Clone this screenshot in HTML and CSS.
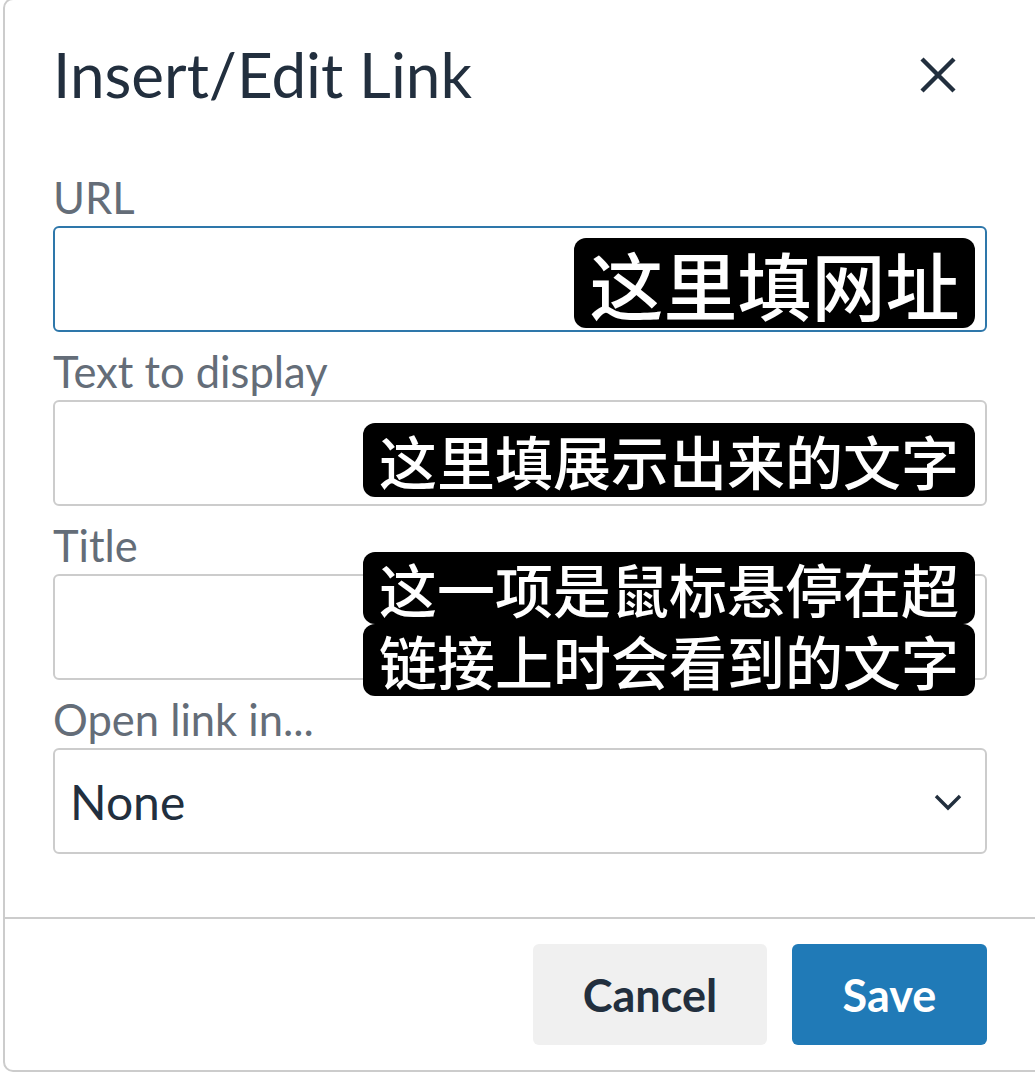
FILE: index.html
```html
<!DOCTYPE html>
<html lang="en">
<head>
<meta charset="utf-8">
<title>Insert/Edit Link</title>
<link rel="stylesheet" href="styles.css">
</head>
<body>
<div class="dialog">
  <div class="header">
    <h1 class="title">Insert/Edit Link</h1>
    <button class="close" aria-label="Close">
      <svg width="40" height="40" viewBox="0 0 40 40"><path d="M4 4 L36 36 M36 4 L4 36" stroke="#222f3e" stroke-width="4.4" fill="none"/></svg>
    </button>
  </div>
  <div class="body">
    <div class="field">
      <label class="label">URL</label>
      <div class="input focused"></div>
      <div class="note note-url"><span class="note-line">这里填网址</span></div>
    </div>
    <div class="field">
      <label class="label">Text to display</label>
      <div class="input"></div>
      <div class="note note-text"><span class="note-line">这里填展示出来的文字</span></div>
    </div>
    <div class="field">
      <label class="label">Title</label>
      <div class="input"></div>
      <div class="note note-title"><span class="note-line">这一项是鼠标悬停在超</span><span class="note-line">链接上时会看到的文字</span></div>
    </div>
    <div class="field">
      <label class="label">Open link in...</label>
      <div class="input select">
        <span class="select-value">None</span>
        <svg class="chevron" width="30" height="18" viewBox="0 0 30 18"><path d="M3 3 L15 15 L27 3" stroke="#222f3e" stroke-width="3.4" fill="none"/></svg>
      </div>
    </div>
  </div>
  <div class="footer">
    <button class="btn btn-cancel">Cancel</button>
    <button class="btn btn-save">Save</button>
  </div>
</div>
</body>
</html>
```

FILE: styles.css
```css
html, body {
  margin: 0;
  padding: 0;
  background: #ffffff;
  overflow: hidden;
  width: 1035px;
  height: 1072px;
}
body {
  font-family: Lato, "Noto Sans", sans-serif;
  color: #222f3e;
}
.dialog {
  box-sizing: border-box;
  width: 1120px;
  height: 1074px;
  margin-top: -2px;
  margin-left: 3px;
  border: 2px solid #cccccc;
  border-radius: 10px;
  display: flex;
  flex-direction: column;
}
.header {
  height: 158px;
  box-sizing: border-box;
  display: flex;
  align-items: flex-start;
  padding-left: 48px;
  width: 985px;
}
.title {
  margin: 0;
  margin-top: 34px;
  font-size: 62px;
  font-weight: 400;
  line-height: 80px;
  flex: 1;
}
.close {
  margin-top: 55px;
  margin-right: 32px;
  background: none;
  border: 0;
  padding: 0;
  width: 40px;
  height: 40px;
}
.body {
  padding-left: 48px;
  width: 934px;
  display: flex;
  flex-direction: column;
}
.field {
  position: relative;
  display: flex;
  flex-direction: column;
}
.label {
  display: block;
  height: 68px;
  line-height: 78px;
  font-size: 43.5px;
  color: #646d78;
}
.input {
  box-sizing: border-box;
  height: 106px;
  border: 2px solid #cccccc;
  border-radius: 6px;
}
.input.focused {
  border-color: #2e77aa;
}
.select {
  display: flex;
  align-items: center;
  padding: 0 22px 0 15px;
}
.select-value {
  flex: 1;
  font-size: 48px;
  color: #222f3e;
}
.chevron {
  margin-top: 2px;
}
.note {
  position: absolute;
  right: 12px;
  display: flex;
  flex-direction: column;
  font-family: "Noto Sans CJK SC", sans-serif;
  font-weight: 500;
  color: #ffffff;
}
.note-line {
  display: block;
  background: #000000;
  border-radius: 12px;
  text-align: center;
  white-space: nowrap;
}
.note-url {
  top: 80px;
}
.note-url .note-line {
  width: 401px;
  height: 90px;
  font-size: 74px;
  line-height: 90px;
}
.note-text {
  top: 91px;
}
.note-text .note-line {
  width: 612px;
  height: 74px;
  font-size: 58px;
  line-height: 74px;
}
.note-title {
  top: 46px;
}
.note-title .note-line {
  width: 612px;
  height: 72px;
  font-size: 58px;
  line-height: 72px;
}
.footer {
  margin-top: 63px;
  border-top: 2px solid #cccccc;
  padding: 25px 134px 0 0;
  display: flex;
  justify-content: flex-end;
  gap: 25px;
}
.btn {
  height: 101px;
  border: 0;
  border-radius: 6px;
  font-family: Lato, "Noto Sans", sans-serif;
  font-size: 45px;
  font-weight: 700;
  padding: 0;
}
.btn-cancel {
  width: 234px;
  background: #f0f0f0;
  color: #222f3e;
}
.btn-save {
  width: 195px;
  background: #207ab7;
  color: #ffffff;
}
```
